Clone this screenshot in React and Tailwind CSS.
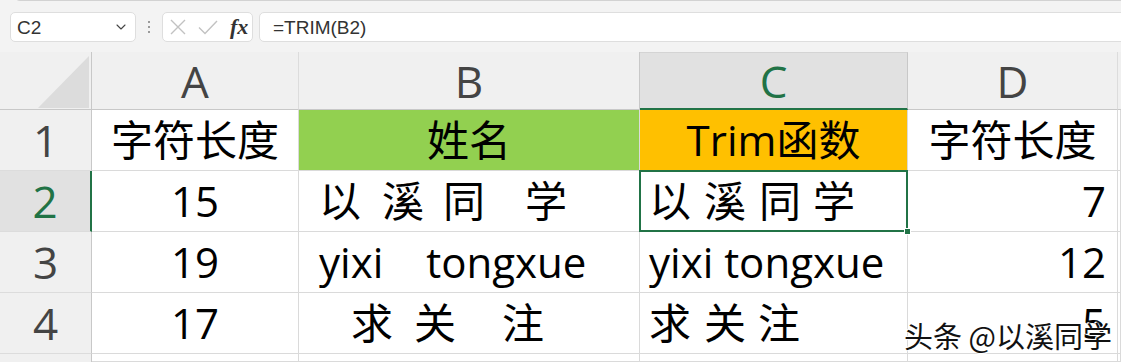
import React from "react";
import { ChevronDown } from "lucide-react";

const hdr = "flex items-center justify-center bg-[#f0f0f0] text-[44px] leading-none text-[#444]";
const cell = "relative flex items-center border-r border-b border-[#dadada] bg-white text-[42px] leading-none text-black whitespace-pre overflow-hidden";

function SelBox() {
  return (
    <div className="absolute left-[-1px] top-[-1px] right-[-1px] bottom-[-1px] border-2 border-[#217346] pointer-events-none">
      <div className="absolute right-[-5px] bottom-[-5px] w-[7px] h-[7px] bg-[#217346] border border-white" />
    </div>
  );
}

export default function App() {
  return (
    <div className="relative w-[1121px] h-[362px] overflow-hidden bg-[#f3f3f3] font-['Open_Sans','Noto_Sans_CJK_SC',sans-serif]">
      {/* top ribbon edge */}
      <div className="absolute left-[14px] top-[-6px] right-0 h-[7px] border-b border-l border-[#d2d2d2] rounded-bl-[6px]" />
      {/* toolbar */}
      <div className="flex items-start h-[52px] pt-[12px] pl-[10px]">
        <div className="shrink-0 flex items-center justify-between w-[126px] h-[30px] bg-white border border-[#dedede] rounded-[5px] pl-[6px] pr-[6px]">
          <span className="text-[19px] text-[#333] font-['Liberation_Sans',sans-serif] leading-none">C2</span>
          <ChevronDown size={16} strokeWidth={1.6} color="#444" />
        </div>
        <div className="shrink-0 flex flex-col items-center justify-center gap-[3px] w-[26px] h-[30px]">
          <div className="w-[2px] h-[2px] bg-[#9a9a9a]" />
          <div className="w-[2px] h-[2px] bg-[#9a9a9a]" />
          <div className="w-[2px] h-[2px] bg-[#9a9a9a]" />
        </div>
        <div className="shrink-0 flex items-center w-[91px] h-[30px] bg-white border border-[#dedede] rounded-[5px] pl-[7px]">
          <svg width="16" height="16" viewBox="0 0 16 16">
            <path d="M1 1L15 15M15 1L1 15" stroke="#c2c2c2" strokeWidth="1.4" fill="none" />
          </svg>
          <svg className="ml-[12px]" width="20" height="15" viewBox="0 0 20 15">
            <path d="M1 7.5L7 13.5L19 1" stroke="#c2c2c2" strokeWidth="1.4" fill="none" />
          </svg>
          <span className="ml-[12px] text-[22px] italic font-semibold text-[#333] font-['Liberation_Serif',serif] leading-none">fx</span>
        </div>
        <div className="shrink-0 flex items-center ml-[6px] w-[900px] h-[30px] bg-white border border-[#dedede] rounded-[5px] pl-[13px]">
          <span className="text-[19px] text-[#333] font-['Liberation_Sans',sans-serif] leading-none">=TRIM(B2)</span>
        </div>
      </div>

      {/* sheet grid */}
      <div className="grid grid-cols-[92px_207px_341px_268px_210px_1fr] grid-rows-[58px_61px_61px_61px_61px_1fr] h-[310px]">
        {/* header row */}
        <div className="relative bg-[#f0f0f0] border-r border-b border-[#c8c8c8]">
          <svg className="absolute left-[38px] top-[4px]" width="51" height="52" viewBox="0 0 51 52">
            <polygon points="51,0 51,52 0,52" fill="#dcdcdc" />
          </svg>
        </div>
        <div className={`${hdr} border-r border-b border-r-[#dcdcdc] border-b-[#c8c8c8]`}>A</div>
        <div className={`${hdr} border-r border-b border-r-[#c8c8c8] border-b-[#c8c8c8]`}>B</div>
        <div className={`${hdr} !bg-[#e1e1e1] text-[#217346] border-t border-t-[#d4d4d4] border-r border-r-[#c8c8c8] border-b-2 border-b-[#217346]`}>C</div>
        <div className={`${hdr} border-r border-b border-r-[#dcdcdc] border-b-[#c8c8c8]`}>D</div>
        <div className={`${hdr} border-b border-b-[#c8c8c8]`} />

        {/* row 1 */}
        <div className={`${hdr} border-r border-b border-r-[#c8c8c8] border-b-[#dcdcdc]`}>1</div>
        <div className={`${cell} justify-center`}>字符长度</div>
        <div className={`${cell} justify-center !bg-[#92d050]`}>姓名</div>
        <div className={`${cell} justify-center !bg-[#ffc000]`}>Trim函数</div>
        <div className={`${cell} justify-center`}>字符长度</div>
        <div className={cell} />

        {/* row 2 */}
        <div className={`${hdr} !bg-[#e1e1e1] text-[#217346] border-r-2 border-b border-r-[#217346] border-b-[#dcdcdc]`}>2</div>
        <div className={`${cell} justify-center`}>15</div>
        <div className={cell}>
          <span className="ml-[20px]">以</span>
          <span className="ml-[21px]">溪</span>
          <span className="ml-[19px]">同</span>
          <span className="ml-[40px]">学</span>
        </div>
        <div className={`${cell} overflow-visible z-10`}>
          <span className="ml-[9px]">以</span>
          <span className="ml-[13px]">溪</span>
          <span className="ml-[13px]">同</span>
          <span className="ml-[12px]">学</span>
          <SelBox />
        </div>
        <div className={`${cell} justify-end pr-[11px]`}>7</div>
        <div className={cell} />

        {/* row 3 */}
        <div className={`${hdr} border-r border-b border-r-[#c8c8c8] border-b-[#dcdcdc]`}>3</div>
        <div className={`${cell} justify-center`}>19</div>
        <div className={cell}>
          <span className="ml-[20px]">yixi</span>
          <span className="ml-[43px]">tongxue</span>
        </div>
        <div className={`${cell} pl-[9px]`}>yixi tongxue</div>
        <div className={`${cell} justify-end pr-[11px]`}>12</div>
        <div className={cell} />

        {/* row 4 */}
        <div className={`${hdr} border-r border-b border-r-[#c8c8c8] border-b-[#dcdcdc]`}>4</div>
        <div className={`${cell} justify-center`}>17</div>
        <div className={cell}>
          <span className="ml-[52px]">求</span>
          <span className="ml-[21px]">关</span>
          <span className="ml-[46px]">注</span>
        </div>
        <div className={cell}>
          <span className="ml-[9px]">求</span>
          <span className="ml-[13px]">关</span>
          <span className="ml-[12px]">注</span>
        </div>
        <div className={`${cell} justify-end pr-[11px]`}>5</div>
        <div className={cell} />

        {/* row 5 partial */}
        <div className={`${hdr} border-r border-r-[#c8c8c8]`} />
        <div className={cell} />
        <div className={cell} />
        <div className={cell} />
        <div className={cell} />
        <div className={cell} />
      </div>

      {/* watermark */}
      <div className="absolute left-[904px] top-[321px] text-[29px] leading-none text-[#111] font-['Noto_Sans_CJK_SC',sans-serif] [text-shadow:0_0_2px_#fff,0_0_2px_#fff,1px_1px_0_#fff,-1px_-1px_0_#fff]">
        头条 @以溪同学
      </div>
    </div>
  );
}
